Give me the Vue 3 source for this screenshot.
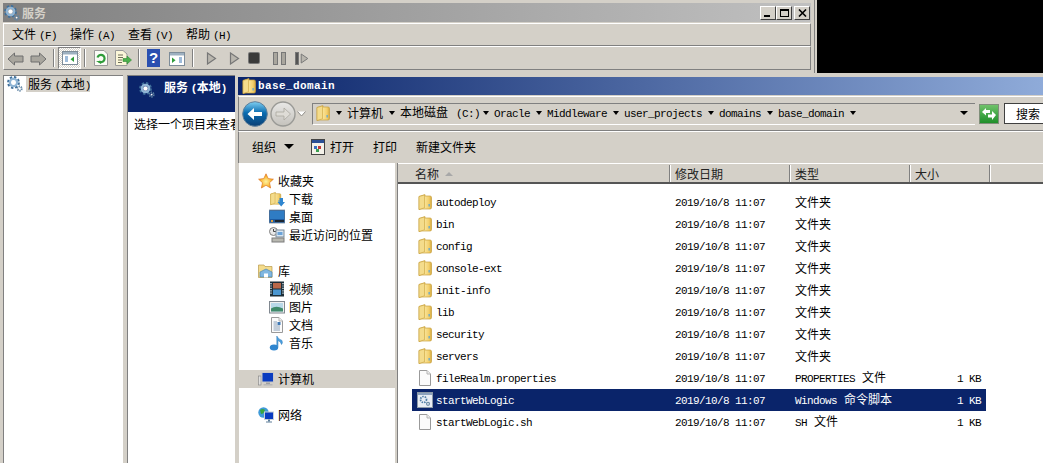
<script setup>
const menus = [
  ['文件', '(F)'],
  ['操作', '(A)'],
  ['查看', '(V)'],
  ['帮助', '(H)']
]
const crumbs = [
  { zh: '计算机' },
  { zh: '本地磁盘', lat: '(C:)' },
  { lat: 'Oracle' },
  { lat: 'Middleware' },
  { lat: 'user_projects' },
  { lat: 'domains' },
  { lat: 'base_domain' }
]
const F = '文件夹'
const files = [
  { name: 'autodeploy', icon: 'folder', type: F },
  { name: 'bin', icon: 'folder', type: F },
  { name: 'config', icon: 'folder', type: F },
  { name: 'console-ext', icon: 'folder', type: F },
  { name: 'init-info', icon: 'folder', type: F },
  { name: 'lib', icon: 'folder', type: F },
  { name: 'security', icon: 'folder', type: F },
  { name: 'servers', icon: 'folder', type: F },
  { name: 'fileRealm.properties', icon: 'page', lat: 'PROPERTIES', type: '文件', size: true },
  { name: 'startWebLogic', icon: 'script', lat: 'Windows', type: '命令脚本', size: true, sel: true },
  { name: 'startWebLogic.sh', icon: 'page', lat: 'SH', type: '文件', size: true }
]
</script>

<template>
  <div class="desk">
    <svg class="defs" aria-hidden="true">
      <defs>
        <linearGradient id="fg" x1="0" y1="0" x2="1" y2="0">
          <stop offset="0" stop-color="#d9b64e" />
          <stop offset="0.35" stop-color="#fbeaa6" />
          <stop offset="0.8" stop-color="#f3cf6c" />
          <stop offset="1" stop-color="#d3a83e" />
        </linearGradient>
        <linearGradient id="back" x1="0" y1="0" x2="0" y2="1">
          <stop offset="0" stop-color="#7fd0f2" />
          <stop offset="0.45" stop-color="#0a6cb0" />
          <stop offset="1" stop-color="#0b3f74" />
        </linearGradient>
        <linearGradient id="fwd" x1="0" y1="0" x2="0" y2="1">
          <stop offset="0" stop-color="#e8e8e6" />
          <stop offset="1" stop-color="#c4c2bc" />
        </linearGradient>
        <radialGradient id="star" cx="0.5" cy="0.55" r="0.55">
          <stop offset="0" stop-color="#fff2a0" />
          <stop offset="0.7" stop-color="#f8b52e" />
          <stop offset="1" stop-color="#e8782a" />
        </radialGradient>
        <symbol id="folder" viewBox="0 0 16 16">
          <path d="M2 2.5 L8 0.6 V2 H13 Q14.5 2 14.5 3.5 V13.5 Q14.5 15 13 15 H4 L2 15.6 Z" fill="url(#fg)" stroke="#c9a13c" stroke-width="0.7" />
          <path d="M2 2.5 L7.5 1 V13.8 L2 15.6 Z" fill="#f4dc8c" stroke="#c9a13c" stroke-width="0.6" />
          <rect x="11.5" y="10" width="1.3" height="2.5" fill="#5fa8d8" />
        </symbol>
        <symbol id="gear" viewBox="0 0 16 16">
          <circle cx="6.5" cy="6.5" r="5" fill="none" stroke="#3f6f9a" stroke-width="2.8" stroke-dasharray="2.2 1.7" />
          <circle cx="6.5" cy="6.5" r="3.6" fill="none" stroke="#8fb4d4" stroke-width="2.4" />
          <circle cx="6.5" cy="6.5" r="2.2" fill="#ffffff" />
          <circle cx="12.6" cy="12.6" r="2.1" fill="none" stroke="#5f84a4" stroke-width="1.9" stroke-dasharray="1.2 0.8" />
          <circle cx="12.6" cy="12.6" r="0.9" fill="#ffffff" />
        </symbol>
        <symbol id="page" viewBox="0 0 16 16">
          <path d="M2.5 0.5 H10 L13.5 4 V15.5 H2.5 Z" fill="#fbfbfb" stroke="#9a9a9a" />
          <path d="M10 0.5 V4 H13.5" fill="#eeeeee" stroke="#b5b5b5" />
        </symbol>
        <symbol id="script" viewBox="0 0 16 16">
          <rect x="0.5" y="0.5" width="15" height="15" fill="#e9eef4" stroke="#8d9aa8" />
          <rect x="1" y="1" width="14" height="2" fill="#8da3bd" />
          <circle cx="6.5" cy="7.5" r="3" fill="none" stroke="#4f7ea6" stroke-width="1.7" stroke-dasharray="1.5 1" />
          <circle cx="11" cy="11.8" r="1.5" fill="none" stroke="#6f8ea8" stroke-width="1.2" />
        </symbol>
        <symbol id="tri" viewBox="0 0 11 13">
          <path d="M1.5 1 L9.5 6.5 L1.5 12 Z" fill="#b9b6ae" stroke="#777" stroke-width="1.2" />
        </symbol>
      </defs>
    </svg>

    <!-- Services console window -->
    <section class="svc">
      <header class="svc-title">
        <svg class="ico16"><use href="#gear" /></svg>
        <span class="svc-name">服务</span>
        <span class="caps">
          <span class="cap"><i class="c-min"></i></span>
          <span class="cap"><i class="c-max"></i></span>
          <span class="cap cap-x">
            <svg width="9" height="8" viewBox="0 0 9 8"><path d="M1 0.5 L8 7.5 M8 0.5 L1 7.5" stroke="#000" stroke-width="1.6" /></svg>
          </span>
        </span>
      </header>
      <nav class="svc-menu">
        <span v-for="m in menus" :key="m[0]" class="menu-item">{{ m[0] }}<span class="lat menu-key">{{ m[1] }}</span></span>
      </nav>
      <div class="svc-tools">
        <svg class="t t-back" width="17" height="14" viewBox="0 0 17 14"><path d="M1 7 L7.5 1 V4 H16 V10 H7.5 V13 Z" fill="#a9a69e" stroke="#6f6f6f" /></svg>
        <svg class="t t-fwd" width="17" height="14" viewBox="0 0 17 14"><path d="M16 7 L9.5 1 V4 H1 V10 H9.5 V13 Z" fill="#a9a69e" stroke="#6f6f6f" /></svg>
        <i class="sep s1"></i>
        <span class="t-active">
          <svg width="16" height="14" viewBox="0 0 16 14">
            <rect x="0.5" y="0.5" width="15" height="13" fill="#fff" stroke="#7d8c99" />
            <rect x="1" y="1" width="14" height="2.5" fill="#9db0c0" />
            <path d="M3 6 H6 M3 8 H6 M3 10 H6" stroke="#3f79b5" />
            <path d="M12 5.5 V11 L8.5 8.2 Z" fill="#2f9c3a" />
          </svg>
        </span>
        <i class="sep s2"></i>
        <svg class="t t-ref" width="14" height="16" viewBox="0 0 14 16">
          <path d="M0.5 0.5 H10 L13.5 4 V15.5 H0.5 Z" fill="#fbfbf6" stroke="#999" />
          <path d="M3.5 7.5 A3.6 3.6 0 1 1 5 11.5" fill="none" stroke="#2f9c3a" stroke-width="2.2" />
          <path d="M2 11 H7 V14 Z" fill="#2f9c3a" />
        </svg>
        <svg class="t t-exp" width="17" height="16" viewBox="0 0 17 16">
          <path d="M0.5 0.5 H8 L12 4 V15.5 H0.5 Z" fill="#fbf6d8" stroke="#999" />
          <path d="M3 5 H8 M3 7.5 H8 M3 10 H7 M3 12.5 H7" stroke="#6f6f5a" />
          <path d="M8 8.5 H12 V6 L16.5 10 L12 14 V11.5 H8 Z" fill="#4bb04b" stroke="#2f8a34" stroke-width="0.6" />
        </svg>
        <i class="sep s3"></i>
        <span class="t-help">?</span>
        <svg class="t t-pane" width="16" height="14" viewBox="0 0 16 14">
          <rect x="0.5" y="0.5" width="15" height="13" fill="#fff" stroke="#7d8c99" />
          <rect x="1" y="1" width="14" height="2.5" fill="#9db0c0" />
          <path d="M3 5.5 V11 L6.5 8.2 Z" fill="#2f9c3a" />
          <path d="M10 6 H13 M10 8 H13 M10 10 H13" stroke="#3f79b5" />
        </svg>
        <i class="sep s4"></i>
        <svg class="t t-p1" width="11" height="13"><use href="#tri" /></svg>
        <svg class="t t-p2" width="11" height="13"><use href="#tri" /></svg>
        <span class="t-stop"></span>
        <span class="t-pause"><i></i><i></i></span>
        <span class="t-step"><i></i><svg width="9" height="13" viewBox="0 0 11 13"><path d="M1.5 1 L9.5 6.5 L1.5 12 Z" fill="#b9b6ae" stroke="#777" stroke-width="1.2" /></svg></span>
      </div>
    </section>

    <div class="black"></div>

    <!-- Console panes below -->
    <aside class="tree">
      <svg class="ico16"><use href="#gear" /></svg>
      <span class="tree-label">服务 <span class="lat">(</span>本地<span class="lat">)</span></span>
    </aside>
    <section class="detail">
      <div class="detail-head">
        <svg class="ico16"><use href="#gear" /></svg>
        <span class="detail-name">服务 <span class="lat">(</span>本地<span class="lat">)</span></span>
      </div>
      <p class="detail-text">选择一个项目来查看</p>
    </section>

    <!-- Explorer window -->
    <section class="exp">
      <header class="exp-title">
        <svg class="ico16"><use href="#folder" /></svg>
        <span class="exp-name">base_domain</span>
      </header>
      <div class="navbar">
        <span class="nav-back">
          <svg width="26" height="26" viewBox="0 0 26 26">
            <circle cx="13" cy="13" r="12.3" fill="url(#back)" stroke="#5f7f9a" />
            <path d="M5.5 13 L12 7 V11 H20 V15 H12 V19 Z" fill="#fff" />
          </svg>
        </span>
        <span class="nav-fwd">
          <svg width="26" height="26" viewBox="0 0 26 26">
            <circle cx="13" cy="13" r="12" fill="url(#fwd)" stroke="#9a9a96" stroke-width="1.4" />
            <path d="M20.5 13 L14 7 V11 H6 V15 H14 V19 Z" fill="#dedcd6" stroke="#a9a7a0" stroke-width="0.8" />
          </svg>
        </span>
        <svg class="nav-drop" width="9" height="6" viewBox="0 0 9 6"><path d="M0.5 0.5 L4.5 5 L8.5 0.5" fill="#fff" stroke="#8f8d88" /></svg>
        <div class="addr">
          <svg class="ico16"><use href="#folder" /></svg>
          <i class="arr arr-first"></i>
          <template v-for="c in crumbs" :key="c.zh || c.lat">
            <span class="crumb"><span v-if="c.zh">{{ c.zh }}</span><span v-if="c.lat" class="lat" :class="{ 'lat-gap': c.zh }">{{ c.lat }}</span></span>
            <i class="arr"></i>
          </template>
          <i class="arr arr-end"></i>
        </div>
        <span class="go">
          <svg width="16" height="14" viewBox="0 0 16 14">
            <path d="M1 5 L5 1 V3 H9 V6 H5 V8.5 Z" fill="#fff" />
            <path d="M15 8 L11 13 V10.5 H7 V7.5 H11 V4 Z" fill="#fff" />
          </svg>
        </span>
        <span class="search">搜索</span>
      </div>
      <div class="exp-tools">
        <span class="organize">组织</span>
        <i class="arr arr-big"></i>
        <svg class="open-ico" width="14" height="16" viewBox="0 0 14 16">
          <rect x="0.5" y="0.5" width="13" height="15" fill="#f4f2ea" stroke="#444" />
          <rect x="1" y="1" width="12" height="3" fill="#2a4f96" />
          <rect x="3" y="7" width="3" height="3" fill="#3a6fc0" />
          <rect x="7" y="7" width="3" height="3" fill="#c03a3a" />
          <rect x="5" y="10" width="3" height="3" fill="#3aa050" />
        </svg>
        <span class="open-txt">打开</span>
        <span class="print-txt">打印</span>
        <span class="new-txt">新建文件夹</span>
      </div>
      <div class="exp-body">
        <nav class="side">
          <div class="s-row">
            <svg class="ico16" viewBox="0 0 16 16"><path d="M8 0.8 L10.2 5.6 L15.4 6.2 L11.5 9.7 L12.6 15 L8 12.3 L3.4 15 L4.5 9.7 L0.6 6.2 L5.8 5.6 Z" fill="url(#star)" stroke="#e07a24" stroke-width="0.7" /></svg>
            <span>收藏夹</span>
          </div>
          <div class="s-row sub">
            <svg class="ico16" viewBox="0 0 16 16">
              <use href="#folder" width="13" height="15" />
              <path d="M10.5 7 H14 V11 H16 L12.2 15.5 L8.5 11 H10.5 Z" fill="#2f86d0" />
            </svg>
            <span>下载</span>
          </div>
          <div class="s-row sub">
            <svg class="ico16" viewBox="0 0 16 16">
              <rect x="0" y="1" width="16" height="13" fill="#1d5aa0" stroke="#7d8c99" stroke-width="0.8" />
              <rect x="1" y="2" width="14" height="8" fill="#2f7cc4" />
              <rect x="6" y="11" width="9" height="2" fill="#1c2630" />
              <rect x="2" y="11" width="2" height="2" fill="#e0a040" />
            </svg>
            <span>桌面</span>
          </div>
          <div class="s-row sub">
            <svg class="ico16" viewBox="0 0 16 16">
              <circle cx="4.5" cy="4.5" r="4" fill="#e8e8e8" stroke="#808080" />
              <path d="M4.5 2 V4.5 H7" fill="none" stroke="#444" />
              <rect x="7" y="3" width="8" height="7" fill="#d8e4f0" stroke="#7d8c99" />
              <rect x="8.5" y="5" width="5" height="3" fill="#6ba3d8" />
              <rect x="3" y="11" width="12" height="4" fill="#b8b8b0" stroke="#7d7d7d" />
            </svg>
            <span>最近访问的位置</span>
          </div>
          <div class="s-gap"></div>
          <div class="s-row">
            <svg class="ico16" viewBox="0 0 16 16">
              <path d="M0.5 2 H6 L7 3.5 H14 V14.5 H0.5 Z" fill="#f4dc8c" stroke="#b99a4a" stroke-width="0.7" />
              <path d="M2 9 L8 6 L14 9 V14 H2 Z" fill="#7fb6e0" stroke="#4f86b0" stroke-width="0.7" />
              <rect x="6" y="10.5" width="4" height="4" fill="#fff" />
            </svg>
            <span>库</span>
          </div>
          <div class="s-row sub">
            <svg class="ico16" viewBox="0 0 16 16">
              <rect x="1" y="0.5" width="14" height="15" fill="#1d2e38" />
              <rect x="4" y="2" width="8" height="5.5" fill="#b9684a" />
              <rect x="4" y="8.5" width="8" height="5.5" fill="#4a96d0" />
              <path d="M2 2 V14 M14 2 V14" stroke="#cfe0ea" stroke-dasharray="1.2 1.2" stroke-width="1.4" />
            </svg>
            <span>视频</span>
          </div>
          <div class="s-row sub">
            <svg class="ico16" viewBox="0 0 16 16">
              <rect x="0.5" y="2.5" width="15" height="11.5" fill="#f0f0f0" stroke="#808890" />
              <rect x="2" y="4" width="12" height="8.5" fill="#b8d8e8" />
              <path d="M2 9.5 Q7 6 14 9.5 V12.5 H2 Z" fill="#3f8a6a" />
            </svg>
            <span>图片</span>
          </div>
          <div class="s-row sub">
            <svg class="ico16" viewBox="0 0 16 16">
              <use href="#page" />
              <path d="M4.5 5 H8 M4.5 7 H8 M4.5 9 H11 M4.5 11 H11 M4.5 13 H11" stroke="#8aa0b8" />
              <rect x="8.5" y="5" width="3" height="3" fill="#3f79b5" />
            </svg>
            <span>文档</span>
          </div>
          <div class="s-row sub">
            <svg class="ico16" viewBox="0 0 16 16">
              <ellipse cx="5" cy="12.5" rx="4.2" ry="3" fill="#2f86d0" />
              <path d="M7.8 12 V1 Q9 4 13 5.5 Q14 8 12.5 9.5 Q12 6.5 9 5.5 V12 Z" fill="#4aa0e0" stroke="#2f78b8" stroke-width="0.5" />
            </svg>
            <span>音乐</span>
          </div>
          <div class="s-gap"></div>
          <div class="s-row s-sel">
            <svg class="ico16" viewBox="0 0 16 16">
              <rect x="0.5" y="5" width="2.5" height="9" fill="#e0e0e0" stroke="#808080" stroke-width="0.6" />
              <rect x="4" y="1.5" width="11.5" height="9.5" fill="#0a3cc0" stroke="#c8c8c8" />
              <rect x="8" y="11.5" width="4" height="1.5" fill="#a0a0a0" />
              <rect x="5.5" y="13" width="9" height="1.5" fill="#b8b8b8" />
            </svg>
            <span>计算机</span>
          </div>
          <div class="s-gap"></div>
          <div class="s-row">
            <svg class="ico16" viewBox="0 0 16 16">
              <circle cx="5.5" cy="5.5" r="5.2" fill="#3f9ad8" />
              <path d="M2 3 Q5 1 7 3 Q6 7 3 7 Z" fill="#3aa83f" />
              <rect x="6.5" y="5" width="9" height="7.5" fill="#0a3cc0" stroke="#c8d0d8" />
              <rect x="10" y="12.5" width="2" height="2" fill="#5f7f9a" />
              <rect x="8" y="14.5" width="6" height="1" fill="#5f7f9a" />
            </svg>
            <span>网络</span>
          </div>
        </nav>
        <div class="split"></div>
        <div class="list">
          <div class="head">
            <span class="h h-name">名称<i class="sort"></i></span>
            <span class="h h-date">修改日期</span>
            <span class="h h-type">类型</span>
            <span class="h h-size">大小</span>
            <span class="h h-rest"></span>
          </div>
          <div class="rows">
            <div v-for="f in files" :key="f.name" class="row" :class="{ sel: f.sel }">
              <span class="c-name">
                <svg class="ico16"><use :href="'#' + f.icon" /></svg>
                <span class="lat">{{ f.name }}</span>
              </span>
              <span class="c-date lat">2019/10/8 11:07</span>
              <span class="c-type"><span v-if="f.lat" class="lat lat-after">{{ f.lat }}</span>{{ f.type }}</span>
              <span class="c-size lat">{{ f.size ? '1 KB' : '' }}</span>
            </div>
          </div>
        </div>
      </div>
    </section>
  </div>
</template>

<style>
html, body { margin: 0; background: #d4d0c8; overflow: hidden; }
</style>

<style scoped>
.desk {
  position: relative;
  width: 1043px;
  height: 463px;
  overflow: hidden;
  background: #d4d0c8;
  font: 12px/16px "Noto Sans CJK SC", "Liberation Sans", sans-serif;
  color: #000;
}
.defs { position: absolute; width: 0; height: 0; }
.ico16 { width: 16px; height: 16px; flex: none; display: block; }
.lat {
  font-family: "Liberation Mono", monospace;
  font-size: 11px;
  letter-spacing: -0.6px;
}
i { display: block; font-style: normal; }

/* services window */
.svc {
  position: absolute;
  left: 0;
  top: 0;
  width: 815px;
  height: 73px;
  box-sizing: border-box;
  padding: 3px 3px 0;
  border-right: 1px solid #808080;
}
.svc-title {
  height: 19px;
  display: flex;
  align-items: center;
  padding-left: 1px;
  background: linear-gradient(to right, #808080, #c0c0c0);
}
.svc-name { margin-left: 2px; color: #d4d0c8; font-weight: 700; }
.caps { margin-left: auto; display: flex; margin-right: 1px; }
.cap {
  width: 16px;
  height: 14px;
  box-sizing: border-box;
  background: #d4d0c8;
  border: 1px solid;
  border-color: #fff #404040 #404040 #fff;
  position: relative;
  display: flex;
  align-items: center;
  justify-content: center;
}
.cap-x { margin-left: 2px; }
.c-min { position: absolute; left: 3px; bottom: 2px; width: 6px; height: 2px; background: #000; }
.c-max { width: 9px; height: 8px; border: 1px solid #000; border-top-width: 2px; box-sizing: border-box; }
.svc-menu {
  height: 23px;
  margin-top: 1px;
  display: flex;
  align-items: center;
  padding-left: 8px;
  gap: 10px;
  border-top: 1px solid #fff;
  border-left: 1px solid #fff;
  border-bottom: 1px solid #808080;
  border-right: 1px solid #808080;
  box-sizing: border-box;
}
.menu-item { width: 48px; white-space: nowrap; }
.menu-key { margin-left: 3px; }
.svc-tools {
  position: relative;
  height: 24px;
  border-top: 1px solid #fff;
  border-left: 1px solid #fff;
  border-bottom: 1px solid #808080;
  border-right: 1px solid #808080;
  box-sizing: border-box;
}
.t { position: absolute; top: 5px; }
.t-back { left: 3px; }
.t-fwd { left: 26px; }
.t-ref { left: 90px; top: 3px; }
.t-exp { left: 111px; top: 3px; }
.t-pane { left: 165px; }
.t-p1 { left: 202px; }
.t-p2 { left: 225px; }
.sep { position: absolute; top: 2px; width: 1px; height: 18px; background: #808080; border-right: 1px solid #fff; }
.s1 { left: 49px; }
.s2 { left: 80px; }
.s3 { left: 134px; }
.s4 { left: 188px; }
.t-active {
  position: absolute;
  left: 54px;
  top: 0;
  width: 23px;
  height: 22px;
  box-sizing: border-box;
  display: flex;
  align-items: center;
  justify-content: center;
  border: 1px solid;
  border-color: #808080 #fff #fff #808080;
  background: repeating-conic-gradient(#fff 0 25%, #d4d0c8 0 50%) 0 0 / 2px 2px;
}
.t-help {
  position: absolute;
  left: 143px;
  top: 2px;
  width: 13px;
  height: 18px;
  background: #2a4fb0;
  color: #fff;
  font: 700 15px/18px "Liberation Sans", sans-serif;
  text-align: center;
}
.t-stop { position: absolute; left: 245px; top: 6px; width: 10px; height: 10px; background: #3a3a3a; border-radius: 1px; box-shadow: 0 0 0 1px #777; }
.t-pause { position: absolute; left: 269px; top: 5px; display: flex; gap: 3px; }
.t-pause i { width: 3px; height: 11px; background: #a9a69e; border: 1px solid #777; }
.t-step { position: absolute; left: 291px; top: 5px; display: flex; align-items: flex-start; gap: 1px; }
.t-step i { width: 2px; height: 11px; background: #555; border: 1px solid #777; }

.black {
  position: absolute;
  left: 817px;
  top: 0;
  width: 226px;
  height: 73px;
  background: #000;
}

/* console panes */
.tree {
  position: absolute;
  left: 3px;
  top: 75px;
  width: 120px;
  height: 388px;
  box-sizing: border-box;
  background: #fff;
  border-top: 1px solid #808080;
  border-left: 1px solid #808080;
  padding-left: 3px;
  display: flex;
  align-items: flex-start;
}
.tree-label { background: #d4d0c8; height: 16px; width: 64px; box-sizing: border-box; margin-left: 3px; padding-left: 2px; white-space: nowrap; }
.detail {
  position: absolute;
  left: 127px;
  top: 75px;
  width: 120px;
  height: 388px;
  box-sizing: border-box;
  background: #fff;
  border-top: 1px solid #808080;
  border-left: 1px solid #808080;
}
.detail-head {
  height: 36px;
  background: #0a246a;
  display: flex;
  align-items: flex-start;
  padding: 6px 0 0 11px;
  box-sizing: border-box;
  color: #fff;
}
.detail-name { margin-left: 9px; margin-top: -3px; font-weight: 700; white-space: nowrap; }
.detail-text { margin: 4px 0 0 6px; white-space: nowrap; }

/* explorer */
.exp {
  position: absolute;
  left: 235px;
  top: 73px;
  width: 808px;
  height: 390px;
  box-sizing: border-box;
  padding: 4px 0 0 3px;
  display: flex;
  flex-direction: column;
  background: #d4d0c8;
}
.exp-title {
  height: 18px;
  flex: none;
  display: flex;
  align-items: center;
  padding-left: 3px;
  background: linear-gradient(to right, #0a246a, #8fabd9);
}
.exp-name {
  margin-left: 1px;
  color: #fff;
  font: 700 11px/16px "Liberation Mono", monospace;
  letter-spacing: 0.4px;
}
.navbar {
  height: 35px;
  flex: none;
  margin-top: 1px;
  position: relative;
  display: flex;
  align-items: center;
  box-sizing: border-box;
  border-top: 1px solid #fff;
  border-bottom: 1px solid #808080;
  border-left: 1px solid #808080;
}
.nav-back { margin-left: 3px; display: block; height: 26px; flex: none; }
.nav-fwd { margin-left: 2px; display: block; height: 26px; flex: none; }
.nav-drop { margin-left: 1px; flex: none; }
.addr {
  margin-left: 6px;
  width: 663px;
  height: 22px;
  box-sizing: border-box;
  border-top: 1px solid #808080;
  border-left: 1px solid #808080;
  border-bottom: 1px solid #fff;
  display: flex;
  align-items: center;
  padding: 0 0 2px 2px;
  flex: none;
}
.arr {
  width: 0;
  height: 0;
  border: 3px solid transparent;
  border-top: 4px solid #000;
  border-bottom: 0;
  margin: 0 5.5px;
  flex: none;
}
.arr-first { margin: 0 5px 0 5px; }
.arr-end { margin-left: auto; margin-right: 7px; border-width: 4px 4px 0; }
.crumb { white-space: nowrap; }
.lat-gap { margin-left: 8px; margin-right: -3px; }
.go {
  margin-left: 4px;
  width: 20px;
  height: 20px;
  box-sizing: border-box;
  background: linear-gradient(#6fc26a, #1f8f2a);
  border: 1px solid #7f8f7a;
  display: flex;
  align-items: center;
  justify-content: center;
  flex: none;
}
.search {
  margin-left: 5px;
  width: 100px;
  height: 21px;
  box-sizing: border-box;
  background: #fff;
  border: 1px solid #404040;
  border-right: 0;
  padding-left: 11px;
  line-height: 19px;
  flex: none;
}
.exp-tools {
  height: 32px;
  flex: none;
  display: flex;
  align-items: center;
  padding: 0 0 2px 13px;
  box-sizing: border-box;
  border-top: 1px solid #fff;
  border-left: 1px solid #808080;
}
.arr-big { border-width: 5px 5px 0; border-top-color: #000; margin: 0 0 0 8px; }
.open-ico { margin-left: 17px; }
.open-txt { margin-left: 5px; }
.print-txt { margin-left: 19px; }
.new-txt { margin-left: 19px; }
.exp-body { flex: 1; display: flex; min-height: 0; }
.side {
  width: 156px;
  flex: none;
  background: #fff;
  padding: 9px 0 0;
  box-sizing: border-box;
  margin-left: 1px;
}
.s-row {
  height: 18px;
  display: flex;
  align-items: center;
  gap: 4px;
  padding-left: 19px;
  box-sizing: border-box;
  white-space: nowrap;
}
.s-row.sub { padding-left: 30px; }
.s-gap { height: 18px; }
.s-sel { background: #d4d0c8; height: 18px; }
.split { width: 2px; flex: none; background: #d4d0c8; border-right: 1px solid #808080; }
.list { flex: 1; background: #fff; min-width: 0; }
.head {
  height: 21px;
  display: flex;
  background: #d4d0c8;
  box-sizing: border-box;
  border-bottom: 2px solid #555;
  border-top: 1px solid #fff;
  padding-top: 1px;
}
.h {
  display: flex;
  align-items: center;
  box-sizing: border-box;
  border-right: 1px solid #808080;
  box-shadow: inset -1px 0 0 #d4d0c8, 1px 0 0 #fff;
  padding-left: 5px;
  flex: none;
  color: #222;
}
.h-name { width: 272px; padding-left: 17px; }
.h-date { width: 120px; }
.h-type { width: 120px; }
.h-size { width: 80px; }
.h-rest { flex: 1; border-right: 0; box-shadow: none; }
.sort {
  width: 0;
  height: 0;
  border: 4px solid transparent;
  border-bottom: 4px solid #a8a8a8;
  border-top: 0;
  margin-left: 6px;
}
.rows { padding: 7px 0 0 14px; }
.row {
  width: 574px;
  height: 22px;
  box-sizing: border-box;
  padding-top: 1px;
  display: flex;
  align-items: center;
}
.row.sel { background: #0a246a; color: #fff; }
.c-name { width: 263px; flex: none; display: flex; align-items: center; gap: 3px; padding-left: 5px; box-sizing: border-box; white-space: nowrap; }
.c-name .ico16 { margin-top: -2px; }
.c-date { width: 120px; flex: none; }
.c-type { width: 120px; flex: none; white-space: nowrap; margin-top: -2px; }
.lat-after { margin-right: 7px; }
.c-size { width: 66px; flex: none; text-align: right; }
</style>
